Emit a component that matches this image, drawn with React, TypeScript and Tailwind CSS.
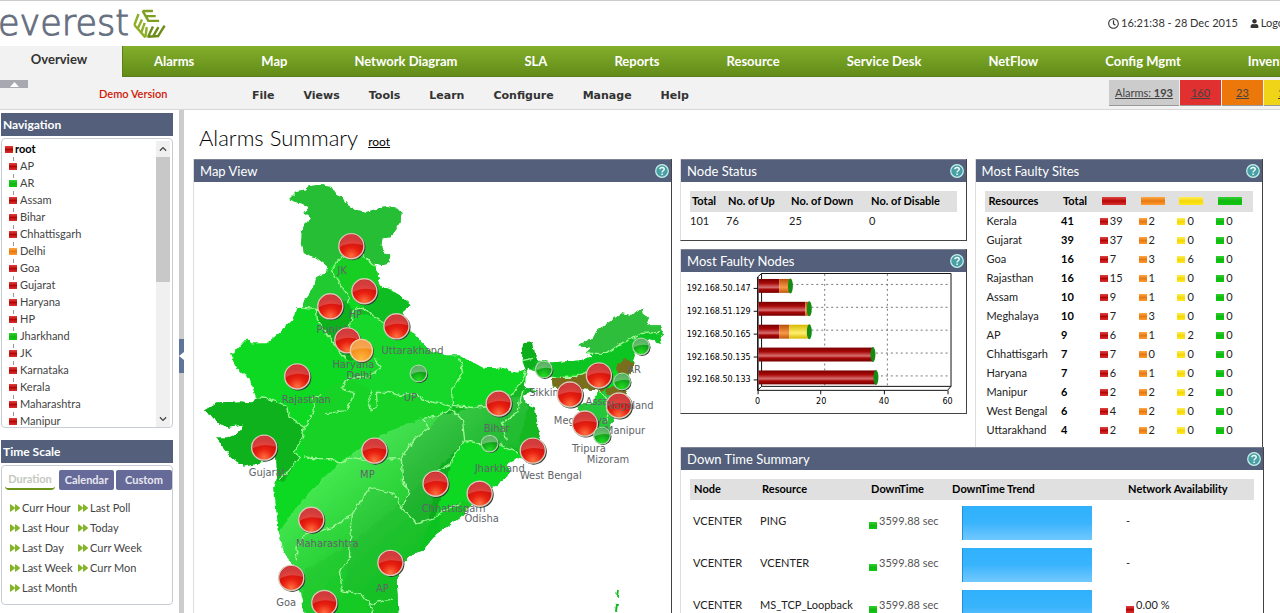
import React from 'react';
import { FaRegClock, FaUser, FaForward, FaChevronUp, FaChevronDown } from 'react-icons/fa';

type Severity = 'critical' | 'major' | 'minor' | 'clear';

const swatchColors: Record<Severity, string> = {
  critical: 'bg-linear-to-b from-[#e04040] via-[#b80000] to-[#d83030]',
  major: 'bg-linear-to-b from-[#ffa940] via-[#e87810] to-[#ff9c30]',
  minor: 'bg-linear-to-b from-[#ffee50] via-[#f5d800] to-[#ffe820]',
  clear: 'bg-linear-to-b from-[#30d030] via-[#10b810] to-[#10c810]',
};

const Swatch: React.FC<{ severity: Severity; wide?: boolean }> = ({ severity, wide }) => (
  <span className={`inline-block shrink-0 ${wide ? 'h-2 w-6' : 'h-[7px] w-2'} ${swatchColors[severity]}`} />
);

const mainTabs = ['Alarms', 'Map', 'Network Diagram', 'SLA', 'Reports', 'Resource', 'Service Desk', 'NetFlow', 'Config Mgmt', 'Inventory'];
const menuItems = ['File', 'Views', 'Tools', 'Learn', 'Configure', 'Manage', 'Help'];

const regions: { name: string; severity: Severity }[] = [
  { name: 'AP', severity: 'critical' },
  { name: 'AR', severity: 'clear' },
  { name: 'Assam', severity: 'critical' },
  { name: 'Bihar', severity: 'critical' },
  { name: 'Chhattisgarh', severity: 'critical' },
  { name: 'Delhi', severity: 'major' },
  { name: 'Goa', severity: 'critical' },
  { name: 'Gujarat', severity: 'critical' },
  { name: 'Haryana', severity: 'critical' },
  { name: 'HP', severity: 'critical' },
  { name: 'Jharkhand', severity: 'clear' },
  { name: 'JK', severity: 'critical' },
  { name: 'Karnataka', severity: 'critical' },
  { name: 'Kerala', severity: 'critical' },
  { name: 'Maharashtra', severity: 'critical' },
  { name: 'Manipur', severity: 'critical' },
];

const durations = ['Curr Hour', 'Last Poll', 'Last Hour', 'Today', 'Last Day', 'Curr Week', 'Last Week', 'Curr Mon', 'Last Month'];

const faultySites: [string, number, number, number, number, number][] = [
  ['Kerala', 41, 39, 2, 0, 0],
  ['Gujarat', 39, 37, 2, 0, 0],
  ['Goa', 16, 7, 3, 6, 0],
  ['Rajasthan', 16, 15, 1, 0, 0],
  ['Assam', 10, 9, 1, 0, 0],
  ['Meghalaya', 10, 7, 3, 0, 0],
  ['AP', 9, 6, 1, 2, 0],
  ['Chhattisgarh', 7, 7, 0, 0, 0],
  ['Haryana', 7, 6, 1, 0, 0],
  ['Manipur', 6, 2, 2, 2, 0],
  ['West Bengal', 6, 4, 2, 0, 0],
  ['Uttarakhand', 4, 2, 2, 0, 0],
];

const severities: Severity[] = ['critical', 'major', 'minor', 'clear'];

const downTimes = [
  { node: 'VCENTER', resource: 'PING', time: '3599.88 sec', availability: '-' },
  { node: 'VCENTER', resource: 'VCENTER', time: '3599.88 sec', availability: '-' },
  { node: 'VCENTER', resource: 'MS_TCP_Loopback', time: '3599.88 sec', availability: '0.00 %' },
];

const faultyNodes = [
  { ip: '192.168.50.147', y: 285, parts: [[758, 779, 'barRed'], [779, 790, 'barOrange']], end: 790 },
  { ip: '192.168.51.129', y: 308, parts: [[758, 805, 'barRed'], [805, 809, 'barOrange']], end: 809 },
  { ip: '192.168.50.165', y: 331, parts: [[758, 779, 'barRed'], [779, 789, 'barOrange'], [789, 809, 'barYellow']], end: 809 },
  { ip: '192.168.50.135', y: 354, parts: [[758, 873, 'barRed']], end: 873 },
  { ip: '192.168.50.133', y: 377, parts: [[758, 876, 'barRed']], end: 876 },
] as { ip: string; y: number; parts: [number, number, string][]; end: number }[];

const mapLabels: [string, number, number][] = [
  ['JK', 343, 274],
  ['HP', 356, 318],
  ['Punjab', 334, 333],
  ['Uttarakhand', 413, 354],
  ['Haryana', 354, 368],
  ['Delhi', 360, 379],
  ['Rajasthan', 307, 403],
  ['UP', 411, 401],
  ['Gujarat', 268, 475],
  ['MP', 368, 477],
  ['Maharashtra', 328, 546],
  ['AP', 383, 591],
  ['Goa', 287, 605],
  ['Bihar', 497, 431],
  ['Jharkhand', 500, 471],
  ['West Bengal', 551, 478],
  ['Odisha', 482, 521],
  ['Chhattisgarh', 454, 511],
  ['Sikkim', 546, 396],
  ['Assam', 602, 404],
  ['Meghalaya', 581, 423],
  ['Manipur', 625, 433],
  ['Tripura', 589, 451],
  ['Mizoram', 608, 462],
  ['AR', 634, 373],
];

const redPins: [number, number][] = [
  [352, 246], [365, 291], [331, 306], [397, 326], [348, 340], [298, 376], [265, 447], [375, 450], [312, 519],
  [391, 562], [292, 577], [325, 602], [436, 483], [480, 493], [499, 403], [533, 450], [599, 375], [570, 394],
  [619, 405], [585, 423],
];

const greenPins: [number, number][] = [[419, 373], [544, 369], [641, 346], [622, 381], [490, 443], [602, 435]];

const mainland =
  'M290 199 297 192 305 191 311 186 321 185 332 187 337 195 343 198 348 205 357 210 367 212 377 209 387 206 397 208 402 213 401 223 395 232 390 237 383 238 382 245 385 252 391 255 389 262 382 265 375 263 378 273 380 283 383 287 392 289 400 295 411 305 403 312 405 317 409 328 420 340 430 350 447 355 460 355 470 360 483 367 500 368 517 372 526 369 523 362 522 347 525 342 532 341 534 353 538 360 553 362 563 361 580 360 592 356 586 352 592 347 578 346 583 343 593 338 597 330 612 320 622 313 633 315 642 308 644 315 649 317 646 325 660 325 664 331 660 337 662 343 650 339 637 350 633 361 634 366 630 374 627 390 620 405 612 423 606 438 597 432 590 413 577 410 580 403 593 402 600 390 576 388 552 387 551 377 540 374 528 366 526 376 525 387 537 390 523 395 525 403 535 407 537 420 540 437 541 458 530 460 520 457 507 463 510 470 507 477 493 487 473 503 460 517 437 533 428 544 423 550 413 553 403 563 397 577 398 593 399 616 306 616 303 600 297 577 293 563 285 553 280 533 277 510 275 487 278 477 277 457 257 463 245 466 233 457 223 445 217 437 228 437 240 432 243 425 230 427 220 423 213 415 205 410 217 403 240 402 253 403 257 397 250 378 242 372 238 368 232 353 240 347 248 338 252 343 267 343 280 333 293 320 297 308 303 307 305 300 315 287 317 277 327 272 328 266 318 258 305 253 302 242 303 227 312 218 305 213 310 207 300 204Z';

const IndiaMap: React.FC = () => (
  <svg viewBox="195 182 476 431" className="block w-full" role="img" aria-label="Map View">
    <defs>
      <filter id="rough" x="-5%" y="-5%" width="110%" height="110%">
        <feTurbulence type="fractalNoise" baseFrequency="0.18" numOctaves="2" seed="4" />
        <feDisplacementMap in="SourceGraphic" scale="5" xChannelSelector="R" yChannelSelector="G" />
      </filter>
      <clipPath id="land">
        <path d={mainland} />
      </clipPath>
      <linearGradient id="gloss" gradientUnits="userSpaceOnUse" x1="345" y1="450" x2="440" y2="560">
        <stop offset="0" stopColor="#8aff90" stopOpacity="0.45" />
        <stop offset="0.5" stopColor="#50c858" stopOpacity="0.4" />
        <stop offset="1" stopColor="#18c028" stopOpacity="0.3" />
      </linearGradient>
      <radialGradient id="pinRed" cx="0.5" cy="0.9" r="0.7">
        <stop offset="0" stopColor="#ff7040" />
        <stop offset="0.5" stopColor="#e82010" />
        <stop offset="1" stopColor="#c80c0c" />
      </radialGradient>
      <radialGradient id="pinGreen" cx="0.5" cy="0.9" r="0.7">
        <stop offset="0" stopColor="#20e020" />
        <stop offset="1" stopColor="#0c8c18" />
      </radialGradient>
      <radialGradient id="pinOrange" cx="0.5" cy="0.9" r="0.7">
        <stop offset="0" stopColor="#ffb840" />
        <stop offset="1" stopColor="#f08010" />
      </radialGradient>
    </defs>

    <g filter="url(#rough)">
      <path d={mainland} fill="#10d820" />
      <g clipPath="url(#land)">
        {/* state fills */}
        <path d="M285 180H410V262L376 266 364 256 342 256 329 268 300 256Z" fill="#27be35" />
        <path d="M342 256 364 256 376 266 384 288 363 307 350 297 340 283 332 270Z" fill="#14cf24" />
        <path d="M332 270 340 283 350 297 348 303 317 308 303 307 295 300 318 270Z" fill="#20ca30" />
        <path d="M317 308 348 300 353 310 350 327 355 345 362 357 348 360 340 350 327 333 318 320Z" fill="#0fb11f" />
        <path d="M353 310 363 307 384 286 415 303 405 320 410 332 390 327 377 318Z" fill="#11bd20" />
        <path d="M350 327 353 310 377 318 390 327 410 332 465 350 452 390 453 405 440 403 400 395 377 392 347 378 362 357Z" fill="#18d82c" />
        <path d="M257 396 268 398 287 405 290 417 305 427 303 437 295 452 300 457 285 480 270 480 200 470V400Z" fill="#0cb21a" />
        <path d="M313 398 347 378 377 392 440 403 440 415 413 440 402 458 333 458 305 455 303 437 315 410Z" fill="#16d328" />
        <path d="M452 408 440 415 430 428 413 440 402 458 403 480 410 493 402 507 417 523 435 518 440 500 453 457 465 440 463 420Z" fill="#0fae20" />
        <path d="M452 405 473 407 513 393 525 380 545 390V465L518 452 497 443 465 440 463 420Z" fill="#12b824" />
        <path d="M402 507 417 523 435 518 460 500 475 505 395 620H375L363 593 343 590 350 557 353 513 370 487 395 493Z" fill="#12c924" />
        <path d="M518 335H537L538 363 526 373Z" fill="#0fae1e" />
        <path d="M574 353 607 353 623 342 643 333 668 332V300H575Z" fill="#2dbe3b" />
        <path d="M534 362 586 354 607 353 623 342 643 333 668 332 640 370 600 370 550 378Z" fill="#10c522" />
        <path d="M548 377 575 377 590 370 603 370 603 392 548 390Z" fill="#7a6d1e" />
        <path d="M617 366 625 359 638 363 631 375 618 373ZM606 388 628 385 625 397 605 395Z" fill="#7a6d1e" />
        <path d="M575 400H596L604 392 622 400 608 445H590Z" fill="#25c73a" />

        {/* highlight sweeping over the south */}
        <path d="M278 535C310 480 370 430 428 418S490 396 530 396L518 448 465 440 437 470 430 520 395 620H290Z" fill="url(#gloss)" />
        <path d="M306 568C350 550 400 500 440 470L440 620H300Z" fill="#0aa01a" opacity="0.12" />
      </g>

      {/* state borders */}
      <g fill="none" stroke="#a0f898" strokeWidth="1.3">
        <path d="M376 266 364 256 342 256 332 270 340 283 350 297 348 303M303 307 317 308 318 320 327 333 340 350 348 360M350 327 353 310 363 307 377 318 390 327" />
        <path d="M257 397 268 398 287 405 290 417 305 427 303 437 295 452 300 457 290 470 280 478M305 427 315 410 313 398 322 394M327 413 347 410 355 393 342 388 347 378 367 377 382 367 375 359" />
        <path d="M305 455 313 458 333 458 340 463 353 457 367 459 402 458M373 390 369 400 372 410 378 407 377 392 390 392 400 395 417 392 423 400 440 403 453 406" />
        <path d="M452 408 440 415 423 418 430 428 413 440 402 458 403 480 410 493 402 507 417 523 435 518 443 510 460 503M402 507 395 493 370 487 363 498 353 513 333 527 307 533 298 545 297 560" />
        <path d="M353 513 350 557 340 570 343 590 363 593 370 603 375 616M370 603 393 598M460 357 463 373 452 390 453 405 473 407 500 404 513 393 523 380 526 370" />
        <path d="M452 408 463 420 465 440 480 443 497 443 518 452M518 412 502 423 507 440M523 390 518 412M465 440 453 457 450 465 437 470" />
        <path d="M586 353 607 353 623 342 643 333 660 332M551 377 575 377 590 370 603 370M600 390 608 402 606 422M523 360 534 358" />
      </g>
      <path d="M618 589 617 596M617 603 616 611" stroke="#18b828" strokeWidth="2" />
    </g>

    <g className="fill-[#606468] font-['DejaVu_Sans_Condensed','DejaVu_Sans',sans-serif] text-[11px]" textAnchor="middle">
      {mapLabels.map(([name, x, y]) => (
        <text key={name} x={x} y={y}>{name}</text>
      ))}
    </g>

    {redPins.map(([x, y]) => (
      <g key={`${x}-${y}`}>
        <circle cx={x + 1} cy={y + 1} r="13" fill="#303830" />
        <circle cx={x} cy={y} r="12.5" fill="url(#pinRed)" stroke="#d8c8b8" strokeWidth="1.4" />
        <path d={`M${x - 11.5} ${y + 1}A11.5 11.5 0 0 1 ${x + 11.5} ${y - 1}Q${x - 2} ${y - 5} ${x - 11.5} ${y + 1}Z`} fill="#fff" opacity="0.2" />
      </g>
    ))}
    {greenPins.map(([x, y]) => (
      <g key={`${x}-${y}`}>
        <circle cx={x + 1} cy={y + 1} r="8.5" fill="#303830" />
        <circle cx={x} cy={y} r="8.3" fill="url(#pinGreen)" stroke="#a8d8a8" strokeWidth="1.2" />
        <path d={`M${x - 7.5} ${y + 1}A7.5 7.5 0 0 1 ${x + 7.5} ${y - 1}Q${x - 1} ${y - 3} ${x - 7.5} ${y + 1}Z`} fill="#fff" opacity="0.35" />
      </g>
    ))}
    <circle cx="363" cy="351" r="11.5" fill="#504838" />
    <circle cx="362" cy="350" r="11" fill="url(#pinOrange)" stroke="#f0d0a0" strokeWidth="1.4" />
    <path d="M352 351A10 10 0 0 1 372 349Q360 346 352 351Z" fill="#fff" opacity="0.25" />
    <text x="630" y="408" textAnchor="middle" className="fill-[#606468] font-['DejaVu_Sans_Condensed','DejaVu_Sans',sans-serif] text-[11px]">Nagaland</text>
  </svg>
);

const FaultyNodesChart: React.FC = () => (
  <svg viewBox="680 271 286 142" className="block w-full font-['DejaVu_Sans_Condensed','DejaVu_Sans',sans-serif] text-[9px]" role="img" aria-label="Most Faulty Nodes">
    <defs>
      <linearGradient id="barRed" x2="0" y2="1">
        <stop offset="0" stopColor="#780000" />
        <stop offset="0.3" stopColor="#a80808" />
        <stop offset="0.6" stopColor="#d87070" />
        <stop offset="0.75" stopColor="#a80808" />
        <stop offset="1" stopColor="#780000" />
      </linearGradient>
      <linearGradient id="barOrange" x2="0" y2="1">
        <stop offset="0" stopColor="#b85008" />
        <stop offset="0.6" stopColor="#f89848" />
        <stop offset="1" stopColor="#c05808" />
      </linearGradient>
      <linearGradient id="barYellow" x2="0" y2="1">
        <stop offset="0" stopColor="#d8b800" />
        <stop offset="0.6" stopColor="#fff070" />
        <stop offset="1" stopColor="#d8b800" />
      </linearGradient>
    </defs>
    <path d="M757 276 761 272.5H951.5V386L948 390H757ZM761 272.5V386H951.5M757 390 761 386" fill="none" stroke="#111" />
    <path d="M824.5 273V386M887.5 273V386M761 283.5H951M761 306.5H951M761 329.5H951M761 352.5H951M761 375.5H951" fill="none" stroke="#777" strokeDasharray="2 3" />
    <path d="M757.5 276V394M820.5 390V394M884.5 390V394M948.5 390V394" stroke="#111" />
    {faultyNodes.map((n) => (
      <g key={n.ip}>
        <path d={`M753 ${n.y + 2.5}H757`} stroke="#111" />
        <text x="750" y={n.y + 5} textAnchor="end">{n.ip}</text>
        {n.parts.map(([from, to, fill]) => (
          <rect key={from} x={from} y={n.y - 7} width={to - from} height="14" fill={`url(#${fill})`} />
        ))}
        <ellipse cx={n.end} cy={n.y} rx="2.5" ry="7.5" fill="#148c14" />
      </g>
    ))}
    <g textAnchor="middle">
      <text x="757" y="404">0</text>
      <text x="821" y="404">20</text>
      <text x="884" y="404">40</text>
      <text x="948" y="404">60</text>
    </g>
  </svg>
);

const HelpIcon: React.FC = () => (
  <svg viewBox="0 0 14 14" className="h-3.5 w-3.5">
    <circle cx="7" cy="7" r="6.3" fill="#48a0a4" stroke="#c8f0ec" strokeWidth="1.2" />
    <path d="M4.9 5.3C5 2.9 9.2 2.9 9.2 5.2 9.2 6.7 7.1 6.7 7.1 8.4M7.1 9.6V11" fill="none" stroke="#fff" strokeWidth="1.4" />
  </svg>
);

const Panel: React.FC<{ title: string; className?: string; children: React.ReactNode }> = ({ title, className = '', children }) => (
  <section className={`border-r border-b border-l border-r-[#444] border-b-[#444] border-l-[#ddd] bg-white ${className}`}>
    <div className="flex h-[23px] items-center justify-between border-t border-[#7d8392] bg-[#535f7b] pr-0.5 pl-1.5">
      <h2 className="pt-0.5 text-[13px] text-white">{title}</h2>
      <button type="button" aria-label={`${title} help`}><HelpIcon /></button>
    </div>
    {children}
  </section>
);

const Logo: React.FC = () => (
  <div className="flex items-start">
    <span className="-ml-0.5 font-['DejaVu_Sans_Light','DejaVu_Sans',sans-serif] text-[35px] leading-[44px] font-extralight text-[#667080] [-webkit-text-stroke:1px_#667080]">everest</span>
    <svg viewBox="0 0 96 86" className="mt-2 ml-1 h-[30px] w-[33px]" fill="none" stroke="#7f9f22" strokeWidth="7">
      <path d="M28 5H58M28 5 46 36M37 20H66M44 34H76" />
      <path d="M4 46 36 82M4 46 16 14M14 56 26 30M24 68 34 40M36 82 40 52" stroke="#8fae28" />
      <path d="M42 80 76 78M44 80 58 50M58 80 74 52M72 80 92 48" stroke="#6b8c18" />
    </svg>
  </div>
);

const Header: React.FC = () => (
  <header className="shrink-0">
    <div className="flex h-[46px] justify-between border-t border-[#ccc] bg-white">
      <Logo />
      <div className="flex w-[172px] items-center gap-3 overflow-hidden text-[11px] whitespace-nowrap text-[#333]">
        <span className="flex shrink-0 items-center gap-0.5"><FaRegClock /> 16:21:38 - 28 Dec 2015</span>
        <a href="#logout" className="flex shrink-0 items-center gap-0.5"><FaUser className="text-[9px]" /> Logout</a>
      </div>
    </div>
    <nav className="flex h-8 overflow-hidden bg-[#f2f2f2] font-bold whitespace-nowrap">
      <a href="#overview" className="w-[122px] shrink-0 pr-1 text-center text-[13px] leading-[26px] text-[#333]">Overview</a>
      <div className="flex h-[31px] grow items-center gap-[67px] border-b border-l border-[#5b7e1c] bg-linear-to-b from-[#83af2b] to-[#628c18] pt-0.5 pl-[31px] text-[13px] text-white">
        {mainTabs.map((tab) => (
          <a key={tab} href="#tab">{tab}</a>
        ))}
      </div>
    </nav>
    <div className="flex h-8 justify-between border-b border-[#d8d8d8] bg-[#f2f2f2]">
      <div className="flex">
        <button type="button" aria-label="Collapse header" className="mt-0.5 flex h-2 w-7 items-center justify-center bg-[#a8a8b0]">
          <svg viewBox="0 0 9 5" className="h-[5px] w-[9px]"><path d="M0 5 4.5 0 9 5Z" fill="#fff" /></svg>
        </button>
        <span className="w-[224px] pl-[71px] text-[11px] leading-8 font-semibold text-[#d01808]">Demo Version</span>
        <nav className="flex items-center gap-[29px] pt-1.5 font-['DejaVu_Sans',Verdana,sans-serif] text-[11px] font-bold text-[#333]">
          {menuItems.map((item) => (
            <a key={item} href="#menu">{item}</a>
          ))}
        </nav>
      </div>
      <div className="mt-0.5 flex h-[26px] w-[171px] gap-px overflow-hidden text-center text-[11px] leading-[25px] text-[#444] underline">
        <a href="#all" className="w-[70px] shrink-0 border-b border-[#999] bg-[#ccc]">Alarms: <b>193</b></a>
        <a href="#critical" className="w-[41px] shrink-0 border-b border-[#999] bg-[#e03030]">160</a>
        <a href="#major" className="w-[41px] shrink-0 border-b border-[#999] bg-[#ec780c]">23</a>
        <a href="#minor" className="w-[41px] shrink-0 border-b border-[#999] bg-[#f0d418]">10</a>
      </div>
    </div>
  </header>
);

const Sidebar: React.FC = () => (
  <aside className="w-[179px] shrink-0 pt-[3px] pr-1.5 pl-px text-[11px] text-[#444]">
    <h2 className="h-[23px] bg-[#535f7b] pl-0.5 text-[12px] leading-[24px] font-bold text-white">Navigation</h2>
    <div className="mt-0.5 flex h-[290px] overflow-hidden rounded-sm border border-[#c8ccd4]">
      <ul className="grow pt-0.5">
        <li className="flex h-[17px] items-center gap-0.5 pl-[3px] font-bold text-black"><Swatch severity="critical" />root</li>
        {regions.map((r) => (
          <li key={r.name} className="relative flex h-[17px] items-center gap-[3px] pl-[7px]">
            <span className="absolute -top-px left-[11px] h-1 border-l border-[#999]" />
            <Swatch severity={r.severity} />
            <a href="#region">{r.name}</a>
          </li>
        ))}
      </ul>
      <div className="mt-0.5 mr-0.5 flex w-3.5 flex-col items-center bg-[#f0f0f0] text-[8px] text-[#444]">
        <button type="button" aria-label="Scroll up" className="flex h-4 items-center"><FaChevronUp /></button>
        <div className="h-[125px] w-full bg-[#c8c8c8]" />
        <button type="button" aria-label="Scroll down" className="mt-auto flex h-4 items-center"><FaChevronDown /></button>
      </div>
    </div>

    <h2 className="mt-3 h-[23px] bg-[#535f7b] pl-0.5 text-[12px] leading-[24px] font-bold text-white">Time Scale</h2>
    <div className="mt-0.5 h-[140px] rounded-sm border border-[#c8ccd4]">
      <div className="mt-1 flex gap-0.5 pl-[3px] text-center leading-[18px] font-bold">
        <button type="button" className="mr-0.5 w-[50px] rounded-sm border-b-2 border-[#6b9418] text-[#c4c8c0]">Duration</button>
        <button type="button" className="w-[55px] rounded-xs bg-[#666a98] text-[#e8e8f0]">Calendar</button>
        <button type="button" className="grow rounded-xs bg-[#666a98] text-[#e8e8f0]">Custom</button>
      </div>
      <ul className="mt-2 grid grid-cols-[68px_1fr] pl-2 leading-5">
        {durations.map((d) => (
          <li key={d} className="whitespace-nowrap">
            <a href="#duration" className="flex items-center gap-0.5"><FaForward className="text-[10px] text-[#84b428]" />{d}</a>
          </li>
        ))}
      </ul>
    </div>
  </aside>
);

const App: React.FC = () => (
  <div className="flex h-screen flex-col overflow-hidden bg-white font-[Lato,sans-serif] text-[11px] text-[#222]">
    <Header />
    <div className="flex min-h-0 grow">
      <Sidebar />
      <div className="w-[5px] shrink-0 bg-[#ccc] pt-[229px]">
        <button type="button" aria-label="Collapse sidebar" className="flex h-[34px] w-full items-center bg-[#5f7499]">
          <svg viewBox="0 0 5 8" className="h-2 w-[5px]"><path d="M5 0 0 4 5 8Z" fill="#fff" /></svg>
        </button>
      </div>

      <main className="min-w-0 grow pr-4 pl-[9px]">
        <div className="flex h-[49px] items-baseline gap-2.5 pt-3 pl-1.5">
          <h1 className="text-[22px] leading-8 font-light text-black">Alarms Summary</h1>
          <a href="#root" className="text-[12px] text-black underline">root</a>
        </div>

        <div className="flex gap-2">
          <Panel title="Map View" className="flex-[478_1_0]">
            <IndiaMap />
          </Panel>

          <div className="flex-[585_1_0]">
            <div className="flex gap-2 pr-px">
              <div className="flex flex-1 flex-col gap-2">
                <Panel title="Node Status" className="h-[82px]">
                  <table className="mx-[9px] mt-[9px] w-[calc(100%-18px)] table-fixed text-left">
                    <thead className="h-[21px] bg-[#e0e0e0] text-black">
                      <tr>
                        <th className="w-9 pl-0.5">Total</th>
                        <th className="w-[63px] pl-0.5">No. of Up</th>
                        <th className="w-20 pl-0.5">No. of Down</th>
                        <th className="pl-0.5">No. of Disable</th>
                      </tr>
                    </thead>
                    <tbody>
                      <tr className="h-[19px]"><td>101</td><td>76</td><td>25</td><td>0</td></tr>
                    </tbody>
                  </table>
                </Panel>
                <Panel title="Most Faulty Nodes">
                  <FaultyNodesChart />
                </Panel>
              </div>

              <Panel title="Most Faulty Sites" className="flex-1 border-b-0 pb-[7px]">
                <table className="mx-[9px] mt-[9px] w-[calc(100%-18px)] table-fixed text-left">
                  <thead className="h-[21px] bg-[#e0e0e0] text-black">
                    <tr>
                      <th className="w-[75px] pl-1">Resources</th>
                      <th className="w-9 pl-0.5">Total</th>
                      {severities.map((s) => (
                        <th key={s} className="w-[38px] pl-1" aria-label={s}><Swatch severity={s} wide /></th>
                      ))}
                    </tr>
                  </thead>
                  <tbody>
                    {faultySites.map(([site, total, ...counts]) => (
                      <tr key={site} className="h-[19px]">
                        <td className="pl-0.5">{site}</td>
                        <td className="font-bold text-black">{total}</td>
                        {counts.map((count, i) => (
                          <td key={severities[i]} className="pl-0.5">
                            <span className="flex items-center gap-0.5"><Swatch severity={severities[i]} />{count}</span>
                          </td>
                        ))}
                      </tr>
                    ))}
                  </tbody>
                </table>
              </Panel>
            </div>

            <Panel title="Down Time Summary">
              <table className="mx-[9px] mt-[9px] w-[calc(100%-18px)] table-fixed text-left">
                <thead className="h-[21px] bg-[#e0e0e0] text-black">
                  <tr>
                    <th className="w-[70px] pl-1">Node</th>
                    <th className="w-[109px] pl-0.5">Resource</th>
                    <th className="w-[81px] pl-0.5">DownTime</th>
                    <th className="w-[176px] pl-0.5">DownTime Trend</th>
                    <th className="pl-0.5">Network Availability</th>
                  </tr>
                </thead>
                <tbody>
                  {downTimes.map((row) => (
                    <tr key={row.resource} className="h-[42px]">
                      <td className="pl-[3px]">{row.node}</td>
                      <td>{row.resource}</td>
                      <td><span className="flex items-end gap-0.5 text-[#555]"><Swatch severity="clear" />{row.time}</span></td>
                      <td className="pr-[34px] pl-3"><div className="mt-1 h-[34px] border-l border-[#2090d8] bg-linear-to-b from-[#30b0fc] via-[#38b4fc] to-[#70c8ff]" /></td>
                      <td>
                        <span className="flex items-end gap-0.5">
                          {row.availability !== '-' && <Swatch severity="critical" />}
                          {row.availability}
                        </span>
                      </td>
                    </tr>
                  ))}
                </tbody>
              </table>
            </Panel>
          </div>
        </div>
      </main>
    </div>
  </div>
);

export default App;
